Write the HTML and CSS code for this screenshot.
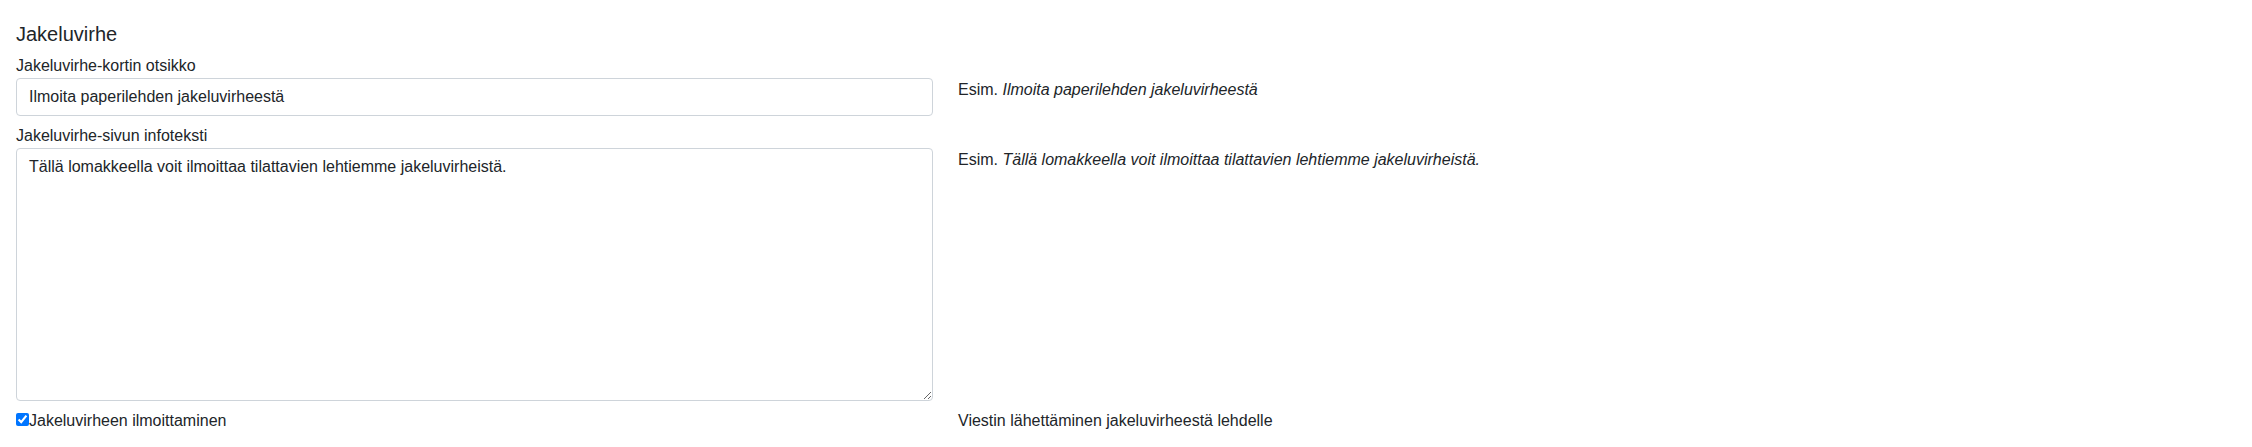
FILE: index.html
```html
<!DOCTYPE html>
<html lang="fi">
<head>
<meta charset="utf-8">
<title>Jakeluvirhe</title>
<link rel="stylesheet" href="styles.css">
</head>
<body>
<div class="page">
  <h5 class="title">Jakeluvirhe</h5>
  <label class="field-label" for="otsikko">Jakeluvirhe-kortin otsikko</label>
  <div class="row">
    <input id="otsikko" class="form-control" type="text" value="Ilmoita paperilehden jakeluvirheestä">
    <div class="help">Esim. <em>Ilmoita paperilehden jakeluvirheestä</em></div>
  </div>
  <label class="field-label spaced" for="info">Jakeluvirhe-sivun infoteksti</label>
  <div class="row">
    <textarea id="info" class="form-control textarea">Tällä lomakkeella voit ilmoittaa tilattavien lehtiemme jakeluvirheistä.</textarea>
    <div class="help">Esim. <em>Tällä lomakkeella voit ilmoittaa tilattavien lehtiemme jakeluvirheistä.</em></div>
  </div>
  <div class="row spaced">
    <label class="check-label"><input type="checkbox" class="check" checked>Jakeluvirheen ilmoittaminen</label>
    <div class="help">Viestin lähettäminen jakeluvirheestä lehdelle</div>
  </div>
</div>
</body>
</html>
```
FILE: styles.css
```css
html, body {
  margin: 0;
  padding: 0;
  background: #fff;
}
body {
  font-family: "Liberation Sans", Arial, sans-serif;
  font-size: 16px;
  line-height: 24px;
  color: #212529;
}
.page {
  padding: 22px 16px 0 16px;
}
.title {
  margin: 0 0 8px 0;
  font-size: 20px;
  line-height: 24px;
  font-weight: normal;
}
.field-label {
  display: block;
  margin: 0;
}
.spaced {
  margin-top: 8px;
}
.row {
  display: grid;
  grid-template-columns: 917px 1fr;
  column-gap: 25px;
  align-items: start;
}
.form-control {
  display: block;
  width: 100%;
  box-sizing: border-box;
  height: 38px;
  margin: 0;
  padding: 6px 12px;
  font-family: "Liberation Sans", Arial, sans-serif;
  font-size: 16px;
  line-height: 24px;
  color: #212529;
  background: #fff;
  border: 1px solid #ced4da;
  border-radius: 4px;
}
.textarea {
  height: 253px;
  resize: vertical;
}
.help {
  margin: 0;
}
.check-label {
  display: block;
}
.check {
  margin: 0;
  width: 13px;
  height: 13px;
  vertical-align: baseline;
}
```
